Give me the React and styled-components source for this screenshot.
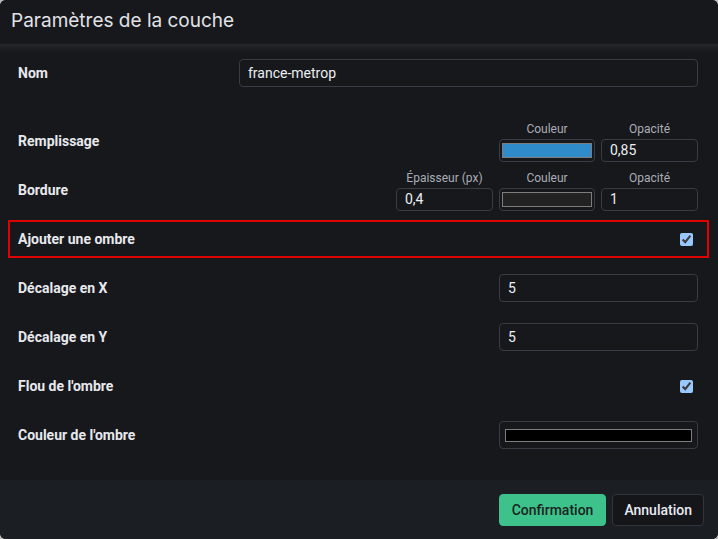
import React from "react";
import styled, { createGlobalStyle } from "styled-components";

const Global = createGlobalStyle`
  html, body { margin: 0; padding: 0; background: #b9b9b9; }
  body { font-family: Roboto, "Liberation Sans", sans-serif; }
  * { box-sizing: border-box; }
`;

const Dialog = styled.div`
  width: 718px;
  height: 539px;
  border-radius: 6px;
  overflow: hidden;
  background: #17181c;
  display: flex;
  flex-direction: column;
  color-scheme: dark;
`;

const Header = styled.header`
  height: 44px;
  flex: none;
  display: flex;
  align-items: center;
  padding: 0 11px 3px;
  font-family: Inter, "Noto Sans", sans-serif;
  font-size: 19px;
  color: #e2e3e6;
  background: #17181c;
`;

const Body = styled.main`
  flex: 1;
  display: flex;
  flex-direction: column;
  gap: 11px;
  padding: 10px 9px 26px 8px;
  background: linear-gradient(#25272c, #1c1d21 5px, #17181c 10px);
`;

const Row = styled.div`
  height: 38px;
  flex: none;
  display: flex;
  align-items: center;
  justify-content: space-between;
  padding: 0 11px 0 10px;
  margin-bottom: ${(p) => (p.$extra ? `${p.$extra}px` : "0")};
  outline: ${(p) => (p.$highlight ? "2px solid #e00000" : "none")};
  outline-offset: -2px;
`;

const Label = styled.span`
  font-size: 14px;
  font-weight: 700;
  color: #e7e9ee;
`;

const Field = styled.input`
  width: ${(p) => p.$w}px;
  height: ${(p) => p.$h || 28}px;
  background: #17181c;
  border: 1px solid #393b45;
  border-radius: 4px;
  color: #eceef2;
  font-family: Roboto, "Liberation Sans", sans-serif;
  font-size: 14px;
  padding: 0 0 0 8px;
  outline: none;
`;

const Groups = styled.div`
  display: flex;
  gap: 6px;
`;

const Group = styled.div`
  display: flex;
  flex-direction: column;
  align-items: center;
  gap: 2px;
`;

const Caption = styled.span`
  font-size: 12px;
  line-height: 16px;
  color: #a9adb6;
`;

const ColorBox = styled.div`
  width: ${(p) => p.$w}px;
  height: ${(p) => p.$h}px;
  border: 1px solid #393b45;
  border-radius: 4px;
  padding: ${(p) => p.$pad};
  display: flex;
`;

const Swatch = styled.div`
  flex: 1;
  background: ${(p) => p.$color};
  border: 1px solid #7d7d7d;
`;

const Check = styled.input.attrs({ type: "checkbox" })`
  width: 13px;
  height: 13px;
  margin: 0 5px 0 0;
`;

const Footer = styled.footer`
  height: 59px;
  flex: none;
  background: #1b1e23;
  display: flex;
  align-items: center;
  justify-content: flex-end;
  gap: 6px;
  padding: 0 14px 0 0;
`;

const Button = styled.button`
  height: 32px;
  padding: 0 ${(p) => (p.$primary ? 12 : 11)}px;
  border-radius: 4px;
  font-family: Roboto, "Liberation Sans", sans-serif;
  font-size: 14px;
  font-weight: 500;
  cursor: pointer;
  border: 1px solid ${(p) => (p.$primary ? "#3ec28b" : "#33353d")};
  background: ${(p) => (p.$primary ? "#3ec28b" : "#15161a")};
  color: ${(p) => (p.$primary ? "#1a2420" : "#e9ebf2")};
`;

export default function App() {
  return (
    <>
      <Global />
      <Dialog>
        <Header>Paramètres de la couche</Header>
        <Body>
          <Row $extra={19}>
            <Label>Nom</Label>
            <Field $w={459} defaultValue="france-metrop" />
          </Row>
          <Row>
            <Label>Remplissage</Label>
            <Groups>
              <Group>
                <Caption>Couleur</Caption>
                <ColorBox $w={96} $h={23} $pad="3px 2px">
                  <Swatch $color="#2f8bc9" />
                </ColorBox>
              </Group>
              <Group>
                <Caption>Opacité</Caption>
                <Field $w={97} $h={23} defaultValue="0,85" />
              </Group>
            </Groups>
          </Row>
          <Row>
            <Label>Bordure</Label>
            <Groups>
              <Group>
                <Caption>Épaisseur (px)</Caption>
                <Field $w={97} $h={23} defaultValue="0,4" />
              </Group>
              <Group>
                <Caption>Couleur</Caption>
                <ColorBox $w={96} $h={23} $pad="3px 2px">
                  <Swatch $color="#222222" />
                </ColorBox>
              </Group>
              <Group>
                <Caption>Opacité</Caption>
                <Field $w={97} $h={23} defaultValue="1" />
              </Group>
            </Groups>
          </Row>
          <Row $highlight>
            <Label>Ajouter une ombre</Label>
            <Check defaultChecked />
          </Row>
          <Row>
            <Label>Décalage en X</Label>
            <Field $w={199} defaultValue="5" />
          </Row>
          <Row>
            <Label>Décalage en Y</Label>
            <Field $w={199} defaultValue="5" />
          </Row>
          <Row>
            <Label>Flou de l'ombre</Label>
            <Check defaultChecked />
          </Row>
          <Row>
            <Label>Couleur de l'ombre</Label>
            <ColorBox $w={199} $h={28} $pad="7px 5px 6px">
              <Swatch $color="#000000" />
            </ColorBox>
          </Row>
        </Body>
        <Footer>
          <Button $primary>Confirmation</Button>
          <Button>Annulation</Button>
        </Footer>
      </Dialog>
    </>
  );
}
